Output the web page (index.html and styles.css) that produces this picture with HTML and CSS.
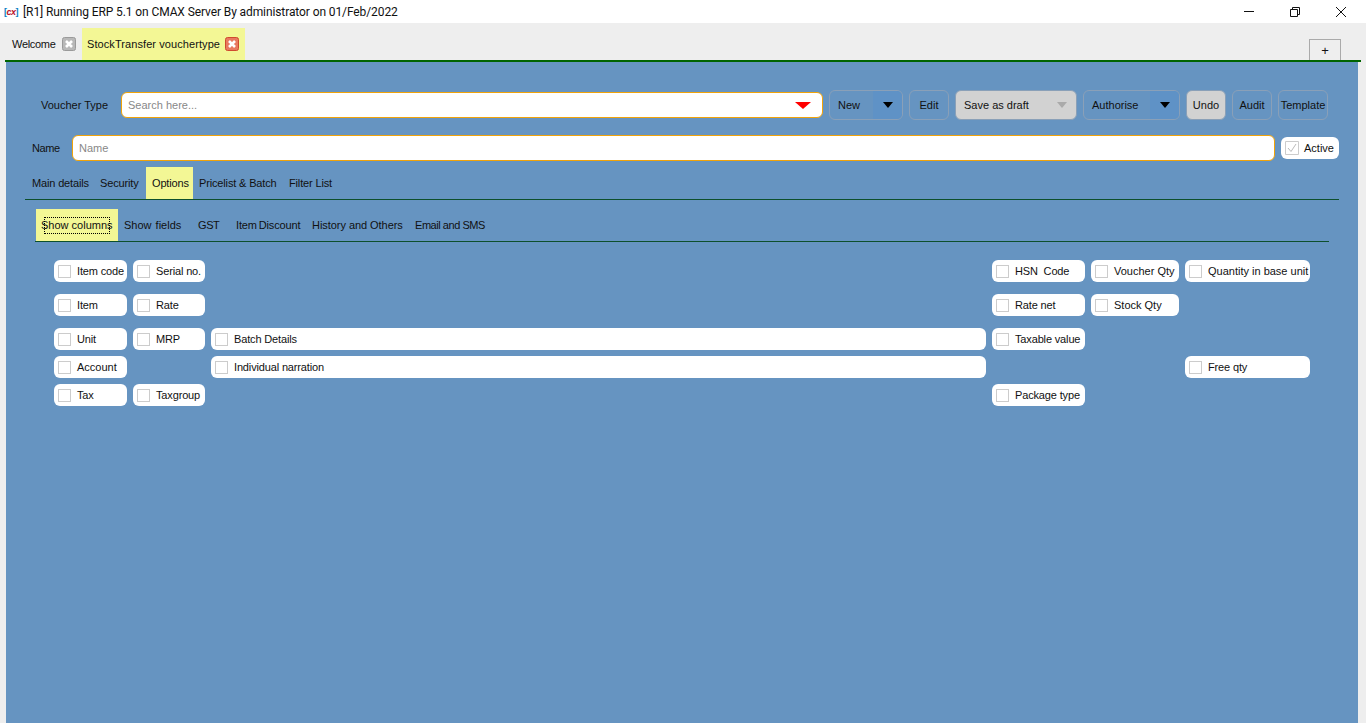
FILE: index.html
```html
<!DOCTYPE html>
<html lang="en">
  <head>
    <meta charset="UTF-8" />
    <title>ERP</title>
    <link rel="stylesheet" href="styles.css">
  </head>
  <body>
    <header class="titlebar">
      <span class="logo">[<b>cx</b>]</span>
      <span class="title">[R1] Running ERP 5.1 on CMAX Server By administrator on 01/Feb/2022</span>
      <div class="win-btns">
        <svg width="12" height="12" viewBox="0 0 12 12"><path d="M1 5.5H11" stroke="#111" fill="none"/></svg>
        <svg width="12" height="12" viewBox="0 0 12 12"><path d="M1.5 3.5H8.5V10.5H1.5ZM3.5 3.5V1.5H10.5V8.5H8.5" stroke="#111" fill="none"/></svg>
        <svg width="12" height="12" viewBox="0 0 12 12"><path d="M1 1L11 11M11 1L1 11" stroke="#111" fill="none"/></svg>
      </div>
    </header>

    <div class="tabstrip">
      <div class="doc-tab first">
        Welcome
        <svg class="tab-close" width="14" height="14" viewBox="0 0 14 14"><rect x=".5" y=".5" width="13" height="13" rx="2" fill="#b8b8b8" stroke="#9a9a9a"/><path d="M4 4L10 10M10 4L4 10" stroke="#fff" stroke-width="2.6" fill="none"/></svg>
      </div>
      <div class="doc-tab current">
        StockTransfer vouchertype
        <svg class="tab-close" width="14" height="14" viewBox="0 0 14 14"><rect x=".5" y=".5" width="13" height="13" rx="2" fill="#e8795f" stroke="#cf4a2e"/><path d="M4 4L10 10M10 4L4 10" stroke="#fff" stroke-width="2.6" fill="none"/></svg>
      </div>
      <div class="add-tab">+</div>
    </div>
    <div class="rule"></div>

    <main class="panel">
      <div class="toolbar">
        <label class="voucher-label">Voucher Type</label>
        <div class="field search">
          <span class="placeholder">Search here...</span>
          <span class="arrow red"></span>
        </div>
        <div class="btn split new"><span>New</span><i><span class="arrow"></span></i></div>
        <div class="btn edit">Edit</div>
        <div class="btn split draft grey"><span>Save as draft</span><i><span class="arrow muted"></span></i></div>
        <div class="btn split authorise"><span>Authorise</span><i><span class="arrow"></span></i></div>
        <div class="btn undo grey">Undo</div>
        <div class="btn audit">Audit</div>
        <div class="btn template">Template</div>
      </div>

      <div class="name-row">
        <label class="name-label">Name</label>
        <div class="field name"><span class="placeholder">Name</span></div>
        <div class="active-box">
          <svg class="tick" width="14" height="14" viewBox="0 0 14 14"><path d="M.5.5H13.5V13.5H.5Z" fill="#fff" stroke="#ccc"/><path d="M3 7L6 10.5L11 3" fill="none" stroke="#bbb"/></svg>
          Active
        </div>
      </div>

      <nav class="tabs main-tabs">
        <a class="t-main">Main details</a>
        <a class="t-sec">Security</a>
        <a class="t-opt on">Options</a>
        <a class="t-price">Pricelist &amp; Batch</a>
        <a>Filter List</a>
      </nav>

      <nav class="tabs sub-tabs">
        <a class="t-cols on"><span class="focus"><span>Show columns</span></span></a>
        <a class="t-fields">Show fields</a>
        <a class="t-gst">GST</a>
        <a class="t-disc">Item Discount</a>
        <a class="t-hist">History and Others</a>
        <a class="t-email">Email and SMS</a>
      </nav>

      <section class="columns">
        <div class="chk c1"><i></i>Item code</div>
        <div class="chk c2"><i></i>Serial no.</div>
        <div class="chk c4"><i></i>HSN&nbsp; Code</div>
        <div class="chk c5 wide"><i></i>Voucher Qty</div>
        <div class="chk c6 wide"><i></i>Quantity in base unit</div>

        <div class="chk c1"><i></i>Item</div>
        <div class="chk c2"><i></i>Rate</div>
        <div class="chk c4"><i></i>Rate net</div>
        <div class="chk c5 wide"><i></i>Stock Qty</div>

        <div class="chk c1"><i></i>Unit</div>
        <div class="chk c2"><i></i>MRP</div>
        <div class="chk c3"><i></i>Batch Details</div>
        <div class="chk c4"><i></i>Taxable value</div>

        <div class="chk c1 wide"><i></i>Account</div>
        <div class="chk c3"><i></i>Individual narration</div>
        <div class="chk c6"><i></i>Free qty</div>

        <div class="chk c1"><i></i>Tax</div>
        <div class="chk c2"><i></i>Taxgroup</div>
        <div class="chk c4"><i></i>Package type</div>
      </section>
    </main>
  </body>
</html>
```

FILE: styles.css
```css
:root {
  --panel: #6694c1;
  --highlight: #f3f795;
  --ink: #111;
  --line: #0d4f2c;
}

* {
  box-sizing: border-box;
}

html, body {
  height: 723px;
}

body {
  margin: 0;
  overflow: hidden;
  background: #eee;
  color: var(--ink);
  font-family: "Liberation Sans", Arial, sans-serif;
  font-size: 11px;
  letter-spacing: -.15px;
  display: flex;
  flex-direction: column;
}

/* window title */
.titlebar {
  height: 23px;
  flex: none;
  background: #fff;
  display: flex;
  align-items: center;
  padding-left: 4px;
}

.logo {
  width: 19px;
  font-size: 9px;
  font-weight: bold;
  letter-spacing: -.5px;
  color: #0b7fc4;
}

.logo b {
  color: #b8102a;
  font-style: italic;
}

.title {
  font-family: Roboto, sans-serif;
  font-size: 12px;
  letter-spacing: -.1px;
  color: #111;
}

.win-btns {
  margin-left: auto;
  display: flex;
  gap: 34px;
  padding-right: 19px;
}

/* document tabs */
.tabstrip {
  height: 37px;
  flex: none;
  background: #eee;
  display: flex;
  align-items: flex-end;
  padding-left: 6px;
  padding-right: 25px;
}

.doc-tab {
  height: 32px;
  display: flex;
  align-items: center;
  justify-content: space-between;
  padding: 0 6px;
}

.doc-tab.first {
  width: 76px;
  letter-spacing: -.3px;
}

.doc-tab.current {
  width: 163px;
  padding-left: 5px;
  background: var(--highlight);
  letter-spacing: .08px;
}

.tab-close {
  flex: none;
}

.add-tab {
  margin-left: auto;
  width: 32px;
  height: 21px;
  border: 1px solid #aaa;
  border-bottom: 0;
  font-size: 13px;
  line-height: 22px;
  text-align: center;
}

.rule {
  height: 2px;
  flex: none;
  margin: 0 5px;
  background: #006400;
}

/* blue working area */
.panel {
  flex: 1;
  margin: 0 8px 0 6px;
  background: var(--panel);
  padding-top: 28px;
}

.toolbar {
  height: 30px;
  display: flex;
  align-items: center;
  gap: 6px;
  padding-left: 35px;
  letter-spacing: 0;
}

.voucher-label {
  width: 74px;
}

.field {
  background: #fff;
  border: 1px solid #f0a30a;
  border-radius: 6px;
  display: flex;
  align-items: center;
  padding-left: 6px;
  letter-spacing: 0;
}

.search {
  width: 702px;
  height: 26px;
  justify-content: space-between;
  padding-right: 11px;
}

.placeholder {
  color: #888;
}

.arrow {
  width: 0;
  height: 0;
  border-style: solid;
  border-width: 6px 5px 0;
  border-color: #000 transparent transparent;
}

.arrow.red {
  border-width: 7px 8px 0;
  border-top-color: #f00;
}

.arrow.muted {
  border-top-color: #aaa;
}

.btn {
  height: 30px;
  border: 1px solid #8aa0b8;
  border-radius: 6px;
  display: flex;
  align-items: center;
  justify-content: center;
}

.btn.grey {
  background: #d2d2d2;
}

.split {
  justify-content: space-between;
  overflow: hidden;
}

.split > span {
  padding-left: 8px;
}

.split i {
  width: 29px;
  height: 100%;
  display: flex;
  align-items: center;
  justify-content: center;
  background: #5f92c6;
}

.btn.grey i {
  background: none;
}

.new { width: 74px; }
.edit { width: 40px; }
.draft { width: 122px; }
.authorise { width: 97px; }
.undo { width: 40px; }
.audit { width: 40px; }
.template { width: 50px; }

.name-row {
  margin-top: 15px;
  height: 26px;
  display: flex;
  align-items: center;
  gap: 6px;
  padding-left: 26px;
}

.name-label {
  width: 34px;
  letter-spacing: -.4px;
}

.name {
  width: 1203px;
  height: 26px;
}

.active-box {
  width: 58px;
  height: 22px;
  background: #fff;
  border-radius: 6px;
  display: flex;
  align-items: center;
  padding-left: 4px;
  gap: 5px;
  letter-spacing: 0;
}

/* inner tab rows */
.tabs {
  display: flex;
  height: 33px;
  border-bottom: 1px solid var(--line);
}

.tabs a {
  display: flex;
  align-items: center;
  padding: 0 6px;
  white-space: nowrap;
}

.tabs a.on {
  background: var(--highlight);
}

.main-tabs {
  margin: 6px 19px 0 19px;
  padding-left: 1px;
}

.sub-tabs {
  margin: 9px 29px 0 29px;
  padding-left: 1px;
}

.t-main { width: 68px; }
.t-sec { width: 52px; }
.t-opt { width: 47px; }
.t-price { width: 90px; }

.t-cols {
  width: 82px;
  letter-spacing: 0;
}

.focus {
  width: 66px;
  height: 17px;
  margin-left: 2px;
  outline: 1px dotted #000;
  outline-offset: -1px;
  display: flex;
  align-items: center;
}

.focus span {
  margin-left: -3px;
}

.t-fields {
  width: 74px;
  letter-spacing: 0;
  word-spacing: 1px;
}

.t-gst {
  width: 38px;
  letter-spacing: -.4px;
}

.t-disc {
  width: 76px;
  word-spacing: -1px;
}

.t-hist {
  width: 103px;
  letter-spacing: -.05px;
}

.t-email {
  letter-spacing: -.45px;
}

/* column checkboxes */
.columns {
  margin: 18px 48px 0 48px;
  display: grid;
  grid-template-columns: 73px 72px 775px 93px 88px 125px;
  grid-template-rows: 34px 34px 28px 28px 22px;
  column-gap: 6px;
}

.chk {
  height: 22px;
  background: #fff;
  border-radius: 6px;
  display: flex;
  align-items: center;
  padding-left: 4px;
  gap: 6px;
  white-space: nowrap;
}

.chk.wide {
  letter-spacing: 0;
}

.chk i {
  width: 13px;
  height: 13px;
  flex: none;
  border: 1px solid #ccc;
  background: #fff;
}

.c1 { grid-column: 1; }
.c2 { grid-column: 2; }
.c3 { grid-column: 3; }
.c4 { grid-column: 4; }
.c5 { grid-column: 5; }
.c6 { grid-column: 6; }
```
